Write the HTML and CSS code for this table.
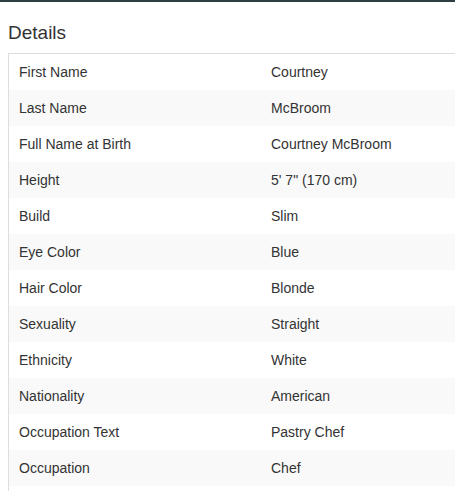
FILE: index.html
```html
<!DOCTYPE html>
<html>
<head>
<meta charset="utf-8">
<link rel="stylesheet" href="styles.css">
</head>
<body>
<div class="topbar"></div>
<div class="content">
  <h2 class="title">Details</h2>
  <table class="details">
    <tr><td>First Name</td><td>Courtney</td></tr>
    <tr><td>Last Name</td><td>McBroom</td></tr>
    <tr><td>Full Name at Birth</td><td>Courtney McBroom</td></tr>
    <tr><td>Height</td><td>5' 7" (170 cm)</td></tr>
    <tr><td>Build</td><td>Slim</td></tr>
    <tr><td>Eye Color</td><td>Blue</td></tr>
    <tr><td>Hair Color</td><td>Blonde</td></tr>
    <tr><td>Sexuality</td><td>Straight</td></tr>
    <tr><td>Ethnicity</td><td>White</td></tr>
    <tr><td>Nationality</td><td>American</td></tr>
    <tr><td>Occupation Text</td><td>Pastry Chef</td></tr>
    <tr><td>Occupation</td><td>Chef</td></tr>
    <tr class="spacer"><td></td><td></td></tr>
  </table>
</div>
</body>
</html>
```
FILE: styles.css
```css
html, body { margin: 0; padding: 0; background: #fff; overflow: hidden; }
body { font-family: "Liberation Sans", Arial, sans-serif; color: #333; }
.topbar { height: 2px; background: #2c3e40; }
.content { padding: 0 0 0 8px; width: 600px; }
.title { margin: 0; padding-top: 20px; font-size: 19px; font-weight: normal; line-height: 22px; height: 31px; color: #333; }
.details { border-collapse: collapse; width: 506px; border: 1px solid #ddd; font-size: 14px; }
.details td { padding: 0 10px; height: 36px; width: 50%; vertical-align: middle; }
.details tr:nth-child(even) td { background: #f9f9f9; }
```
